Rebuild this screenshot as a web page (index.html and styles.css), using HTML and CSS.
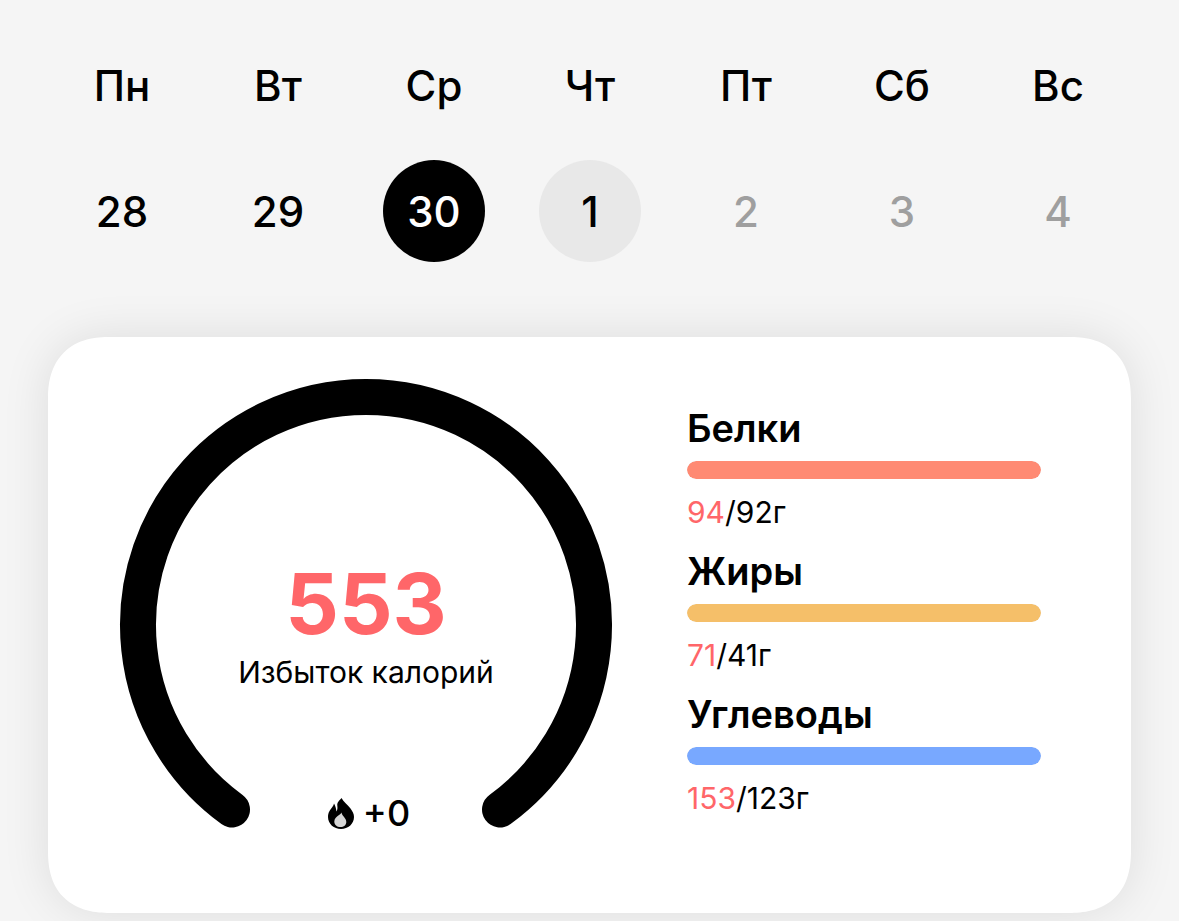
FILE: index.html
```html
<!DOCTYPE html>
<html lang="ru">
<head>
    <meta charset="UTF-8">
    <meta name="viewport" content="width=device-width, initial-scale=1.0">
    <title>Дневник калорий</title>
    <link rel="stylesheet" href="styles.css">
</head>
<body>
    <div class="calendar">
        <span class="weekday">Пн</span>
        <span class="weekday">Вт</span>
        <span class="weekday">Ср</span>
        <span class="weekday">Чт</span>
        <span class="weekday">Пт</span>
        <span class="weekday">Сб</span>
        <span class="weekday">Вс</span>
        <button class="day">28</button>
        <button class="day">29</button>
        <button class="day selected">30</button>
        <button class="day today">1</button>
        <button class="day" disabled>2</button>
        <button class="day" disabled>3</button>
        <button class="day" disabled>4</button>
    </div>

    <div class="card">
        <div class="ring">
            <svg class="ring-arc" viewBox="0 0 492 492" aria-hidden="true">
                <path d="M112 430.500A228 228 0 1 1 380 430.500" fill="none" stroke="#000" stroke-width="36" stroke-linecap="round"/>
            </svg>
            <div class="ring-text">
                <strong class="calories">553</strong>
                <span class="calories-label">Избыток калорий</span>
            </div>
            <div class="burned">
                <svg class="flame" viewBox="0 0 26 31" aria-hidden="true">
                    <path d="M13.500 0C15.500 4 19.500 6.400 22.500 10.500C24.700 13.500 26 16 26 19C26 26 20 31 13 31C6 31 0 26 0 19C0 14 2.500 11.500 4 9.500C5 8.200 5.500 7.200 6 5.500C7.300 7.600 8.200 10.500 8.400 13.500C9.500 12 9.600 10 9.300 7.500C9 4 11.500 2.500 13.500 0Z" fill="#000"/>
                    <path d="M13.500 14.500C14 18 18.300 20 18.300 24C18.300 27 15.800 29 12.500 29C9 29 6.300 27 6.300 23.500C6.300 20.500 8.500 19 10 17.800C11.500 16.700 12.800 16 13.500 14.500Z" fill="#d6d6d6"/>
                </svg>
                <span>+0</span>
            </div>
        </div>

        <div class="macros">
            <div class="macro">
                <h3 id="protein">Белки</h3>
                <div class="bar" role="progressbar" aria-labelledby="protein" aria-valuenow="94" aria-valuemax="92">
                    <div class="fill protein" style="width: 100%"></div>
                </div>
                <p><span class="over">94</span>/92г</p>
            </div>
            <div class="macro">
                <h3 id="fat">Жиры</h3>
                <div class="bar" role="progressbar" aria-labelledby="fat" aria-valuenow="71" aria-valuemax="41">
                    <div class="fill fat" style="width: 100%"></div>
                </div>
                <p><span class="over">71</span>/41г</p>
            </div>
            <div class="macro">
                <h3 id="carbs">Углеводы</h3>
                <div class="bar" role="progressbar" aria-labelledby="carbs" aria-valuenow="153" aria-valuemax="123">
                    <div class="fill carbs" style="width: 100%"></div>
                </div>
                <p><span class="over">153</span>/123г</p>
            </div>
        </div>
    </div>
</body>
</html>
```
FILE: styles.css
```css
*{
    padding: 0;
    margin: 0;
    box-sizing: border-box;
}

body{
    min-height: 100vh;
    font-family: Inter, "Liberation Sans", sans-serif;
    background-color: #f5f5f5;
    color: #000;
}

.calendar{
    display: grid;
    grid-template-columns: repeat(7, 1fr);
    row-gap: 49px;
    justify-items: center;
    padding: 61px 43px 75px 44px;
}

.weekday{
    font-size: 42px;
    font-weight: 500;
    line-height: 50px;
}

.day{
    width: 102px;
    height: 102px;
    border: none;
    border-radius: 50%;
    background-color: transparent;
    color: #000;
    font-family: inherit;
    font-size: 42px;
    font-weight: 500;
    cursor: pointer;
}

.day:disabled{
    color: #9f9f9f;
    cursor: default;
}

.day.selected{
    background-color: #000;
    color: #fff;
}

.day.today{
    background-color: #e8e8e8;
}

.card{
    display: flex;
    gap: 75px;
    margin: 0 48px;
    padding: 42px 90px 42px 72px;
    border-radius: 54px;
    background-color: #fff;
    box-shadow: 0 0 48px rgba(0, 0, 0, 0.1);
}

/* smoother corners where the browser can draw them */
@supports (corner-shape: squircle){
    .card{
        border-radius: 62px;
        corner-shape: superellipse(1.25);
    }
}

/* arc, text and burned calories share one grid cell */
.ring{
    display: grid;
    flex: none;
    width: 492px;
}

.ring-arc, .ring-text, .burned{
    grid-area: 1 / 1;
}

.ring-arc{
    display: block;
    width: 100%;
    overflow: visible;
}

.ring-text{
    display: flex;
    flex-direction: column;
    align-items: center;
    align-self: center;
    padding-bottom: 6px;
}

.calories{
    color: #ff6669;
    font-size: 84px;
    font-weight: 700;
    line-height: 100px;
}

.calories-label{
    font-size: 30px;
    line-height: 36px;
}

.burned{
    display: flex;
    align-items: center;
    align-self: end;
    justify-self: center;
    gap: 9px;
    padding: 0 0 36px 6px;
    font-size: 36px;
    font-weight: 500;
    line-height: 44px;
}

.flame{
    width: 26px;
    height: 31px;
}

.macros{
    display: flex;
    flex: 1;
    flex-direction: column;
    gap: 18px;
    padding-top: 26px;
}

.macro h3{
    font-size: 38px;
    font-weight: 600;
    line-height: 46px;
}

.bar{
    height: 18px;
    margin: 10px 0 15px;
    border-radius: 9px;
    background-color: #eee;
    overflow: hidden;
}

.fill{
    height: 100%;
    border-radius: 9px;
}

.fill.protein{
    background-color: #ff8a73;
}

.fill.fat{
    background-color: #f5bf69;
}

.fill.carbs{
    background-color: #78a8ff;
}

.macro p{
    font-size: 30px;
    line-height: 36px;
}

.over{
    color: #ff6669;
}
```
